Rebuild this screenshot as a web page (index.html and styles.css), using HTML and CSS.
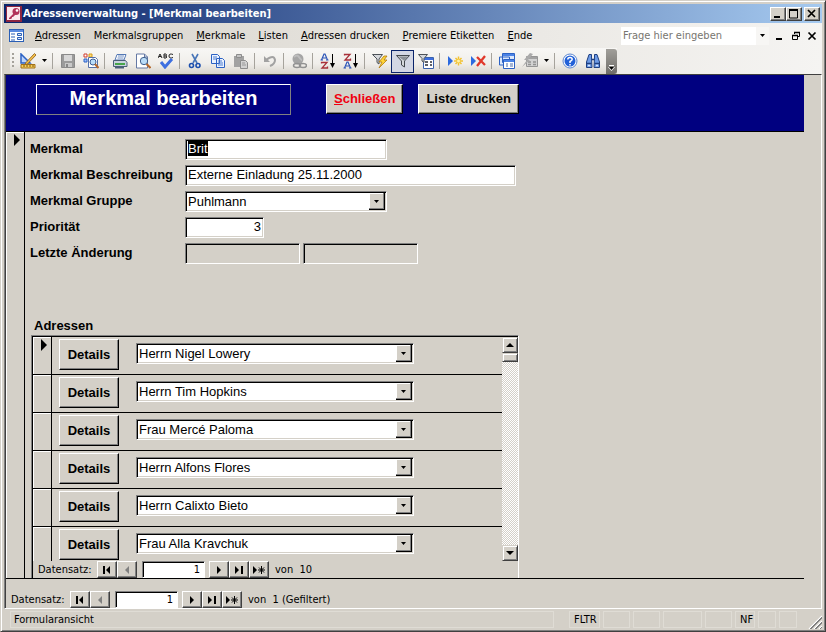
FILE: index.html
```html
<!DOCTYPE html>
<html lang="de">
<head>
<meta charset="utf-8">
<title>Adressenverwaltung - [Merkmal bearbeiten]</title>
<link rel="stylesheet" href="styles.css">
</head>
<body>
<div class="window">
  <header class="titlebar">
    <svg class="app-icon" viewBox="0 0 16 16"><rect width="16" height="16" fill="#8d2540"/><rect x="1" y="1" width="13" height="13" fill="#fbe9ee"/><circle cx="10" cy="5.5" r="3.5" fill="#b2325a"/><circle cx="11" cy="4.500" r="1.300" fill="#fff"/><path d="M8 7 3 12v1h2l1-1V11h1L10 8z" fill="#b2325a"/></svg>
    <h1 class="title">Adressenverwaltung - [Merkmal bearbeiten]</h1>
    <div class="caption-buttons">
      <button class="cap" aria-label="Minimieren"><svg viewBox="0 0 12 10"><path d="M2 8h6" stroke="#000" stroke-width="2"/></svg></button>
      <button class="cap" aria-label="Maximieren"><svg viewBox="0 0 12 10"><path d="M1.500 1v8h8V1" fill="none" stroke="#000"/><path d="M1 1h9" stroke="#000" stroke-width="2"/></svg></button>
      <button class="cap cap-close" aria-label="Beenden"><svg viewBox="0 0 12 10"><path d="m2 1 7 7M9 1 2 8" stroke="#000" stroke-width="1.700"/></svg></button>
    </div>
  </header>

  <nav class="menubar">
    <svg class="form-icon" viewBox="0 0 16 16"><rect x=".5" y="1.500" width="14" height="12" fill="#fff" stroke="#2b5fb5"/><path d="M1 3h13" stroke="#5b8be0" stroke-width="2"/><path d="M2 6h4M2 9h4M2 12h4" stroke="#2b5fb5"/><path d="M8.500 5.500h4v2h-4zM8.500 9.500h4v2h-4z" fill="#dbe8fc" stroke="#2b5fb5"/></svg>
    <div class="menu-items">
      <button><u>A</u>dressen</button>
      <button>Merkmals<u>g</u>ruppen</button>
      <button><u>M</u>erkmale</button>
      <button><u>L</u>isten</button>
      <button><u>A</u>dressen drucken</button>
      <button><u>P</u>remiere Etiketten</button>
      <button><u>E</u>nde</button>
    </div>
    <div class="ask">
      <input type="text" placeholder="Frage hier eingeben" aria-label="Frage hier eingeben">
      <button aria-label="Fragen anzeigen"><svg viewBox="0 0 7 4"><path d="M1 0h5L3.500 3z"/></svg></button>
    </div>
    <div class="mdi-buttons">
      <button aria-label="Formular minimieren"><svg viewBox="0 0 10 10"><path d="M1 8h6" stroke="#000" stroke-width="2"/></svg></button>
      <button aria-label="Formular wiederherstellen"><svg viewBox="0 0 10 10"><path d="M3.500 3V1.500h5v4H7M1.500 4.500h5v4h-5z" fill="none" stroke="#000"/><path d="M3 1.500h6M1 4.500h6" stroke="#000" stroke-width="1.600"/></svg></button>
      <button aria-label="Formular schließen"><svg viewBox="0 0 10 10"><path d="m1.500 1.500 7 7M8.500 1.500l-7 7" stroke="#000" stroke-width="1.700"/></svg></button>
    </div>
  </nav>

  <div class="toolbar-row">
    <div class="toolbar" role="toolbar" aria-label="Formularansicht">
      <span class="grip"></span>
      <button class="tool" aria-label="Ansicht"><svg viewBox="0 0 16 16"><path d="M1 1v9h9z" fill="#bcd4fa" stroke="#2c62c4" stroke-width="1.500"/><path d="M14.500.5 6 9.500 5 12l2.500-1L16 2z" fill="#f5c04a" stroke="#8a5a14" stroke-width=".8"/><path d="M1 11.500h14v3.500H1z" fill="#f6cf58" stroke="#a1701a"/><path d="M4 12v2M7 12v2M10 12v2M13 12v2" stroke="#7e5510"/></svg></button>
      <button class="drop" aria-label="Ansichten"><svg viewBox="0 0 7 4"><path d="M1 0h5L3.500 3z"/></svg></button>
      <span class="sep"></span>
      <button class="tool" aria-label="Speichern"><svg viewBox="0 0 16 16"><path d="M1.500 1.500h13v13h-13z" fill="#9b9b9b" stroke="#8a8a8a"/><path d="M4 2h8v6H4z" fill="#d8d8d8"/><path d="M5 10h7v4H5z" fill="#c9c9c9"/><path d="M6 11h2v3H6z" fill="#888"/></svg></button>
      <button class="tool" aria-label="Dateisuche"><svg viewBox="0 0 16 16"><path d="M1 1h3v3H1z" fill="#fff" stroke="#d03a2a"/><path d="M6 1h3v3H6z" fill="#ffe27a" stroke="#d59a1c"/><path d="M1 6h3v3H1z" fill="#9cc0ff" stroke="#2c62c4"/><path d="M5.500 4.500h7l2 2v8h-9z" fill="#fff" stroke="#5470a8"/><circle cx="10" cy="9" r="3" fill="#b9dcf8" stroke="#3c5c94"/><path d="m12 11 3.500 4" stroke="#b5682c" stroke-width="2"/></svg></button>
      <span class="sep"></span>
      <button class="tool" aria-label="Drucken"><svg viewBox="0 0 16 16"><path d="M5 1.500h9L12 7H3z" fill="#fff" stroke="#5478b4"/><path d="M6 3h6M5.500 5h6" stroke="#7090c4"/><path d="M1.500 7.500h12l1.500 2v4H1.500z" fill="#c9d2dd" stroke="#4a5e78"/><path d="M3 10h10v2H3z" fill="#46a54a"/><path d="M3 14.500h9" stroke="#4a5e78" stroke-width="2"/></svg></button>
      <button class="tool" aria-label="Seitenansicht"><svg viewBox="0 0 16 16"><path d="M1.500 1h8l3 3v11h-11z" fill="#fff" stroke="#6579a4"/><path d="M9.500 1v3h3" fill="none" stroke="#6579a4"/><circle cx="9" cy="8" r="3.700" fill="#b9dcf8" stroke="#3f5e8c"/><path d="m11.500 11 4 4" stroke="#b5682c" stroke-width="2"/></svg></button>
      <button class="tool" aria-label="Rechtschreibung"><svg viewBox="0 0 16 16"><path d="m0 5 2-4 2 4M1 3.500h2M6 1v4h2q1.500-1 0-2 1-1.500 0-2H6M6 3h2M15 1.500q-4-1.500-4 1.500t4 1.500" fill="none" stroke="#222"/><path d="m3 9 4 5 7-8" fill="none" stroke="#3d6fe0" stroke-width="3"/></svg></button>
      <span class="sep"></span>
      <button class="tool" aria-label="Ausschneiden"><svg viewBox="0 0 16 16"><path d="m5 1 5 9M11 1 6 10" stroke="#4a76b8" stroke-width="1.600"/><circle cx="4.500" cy="12.500" r="2" fill="none" stroke="#1c4fae" stroke-width="1.600"/><circle cx="11" cy="12.500" r="2" fill="none" stroke="#1c4fae" stroke-width="1.600"/></svg></button>
      <button class="tool" aria-label="Kopieren"><svg viewBox="0 0 16 16"><path d="M1.500 1.500h6l2 2v7h-8zM6.500 5.500h6l2 2v7h-8z" fill="#eaf2ff" stroke="#2c62c4"/><path d="M3 4h4M3 6h3M8 8h4M8 10h5M8 12h5" stroke="#4c7cd0"/></svg></button>
      <button class="tool" aria-label="Einfügen"><svg viewBox="0 0 16 16"><path d="M1 3h10v11H1z" fill="#a2a2a2"/><path d="M3.500 1.500h5v3h-5z" fill="#c5c5c5" stroke="#8c8c8c"/><path d="M7.500 7.500h5l2 2v6h-7z" fill="#d2d2d2" stroke="#8c8c8c"/><path d="M9 10h3M9 12h4" stroke="#999"/></svg></button>
      <span class="sep"></span>
      <button class="tool" aria-label="Rückgängig"><svg viewBox="0 0 16 16"><path d="M4 7q8-6 9 0 0 4-5 6" fill="none" stroke="#a2a2a2" stroke-width="2"/><path d="M2 3v6h6z" fill="#a2a2a2"/></svg></button>
      <span class="sep"></span>
      <button class="tool" aria-label="Hyperlink"><svg viewBox="0 0 16 16"><circle cx="7" cy="6" r="5.500" fill="#a5a5a5"/><path d="M3 4q3-3 5 0t3 3" stroke="#bdbdbd" fill="none" stroke-width="2"/><ellipse cx="6" cy="12.500" rx="3.500" ry="2" fill="none" stroke="#929292" stroke-width="1.500"/><ellipse cx="12" cy="12.500" rx="3.500" ry="2" fill="none" stroke="#929292" stroke-width="1.500"/></svg></button>
      <span class="sep"></span>
      <button class="tool" aria-label="Aufsteigend sortieren"><svg viewBox="0 0 16 16"><path d="m1.500 7 2.500-6h1l2.500 6M3 5h3M0.500 7h2.500M6 7h2.500" fill="none" stroke="#2c55b8" stroke-width="1.200"/><path d="M1.500 10.500V9.500H7L2 15h5.500v-1.500" fill="none" stroke="#a8303a" stroke-width="1.300"/><path d="M12.500 1v12" stroke="#000"/><path d="M10 10h5l-2.500 5z"/></svg></button>
      <button class="tool" aria-label="Absteigend sortieren"><svg viewBox="0 0 16 16"><path d="M1.500 2.500V1.500H7L2 7h5.500V5.500" fill="none" stroke="#a8303a" stroke-width="1.300"/><path d="m1.500 15 2.500-6h1l2.500 6M3 13h3M0.500 15h2.500M6 15h2.500" fill="none" stroke="#2c55b8" stroke-width="1.200"/><path d="M12.500 1v12" stroke="#000"/><path d="M10 10h5l-2.500 5z"/></svg></button>
      <span class="sep"></span>
      <button class="tool" aria-label="Auswahlbasierter Filter"><svg viewBox="0 0 16 16"><path d="M.5 1.500h10L7 6v5l-2-1.500V6z" fill="#d5d8dc" stroke="#4d5359"/><path d="m12 3-5 6h3l-3 6 8-8h-3l3-4z" fill="#ffd535" stroke="#b17a10" stroke-width=".8"/></svg></button>
      <button class="tool pressed" aria-label="Filter entfernen" aria-pressed="true"><svg viewBox="0 0 16 16"><path d="M1.500 2.500h13L9.500 8v6l-3-2V8z" fill="#d5d8dc" stroke="#42474d"/><path d="M3 3.500h10l-4 4z" fill="#8b9096"/></svg></button>
      <button class="tool" aria-label="Formularbasierter Filter"><svg viewBox="0 0 16 16"><path d="M5.500 4.500h10v11h-10z" fill="#fff" stroke="#3a62ac"/><path d="M6 6h9" stroke="#3d6fe0" stroke-width="2"/><path d="M7 9h3M7 12h3M12 9h2M12 12h2" stroke="#2b2f38" stroke-width="1.500"/><path d="M.5 1.500h9L6 5.500v4L4 8V5.500z" fill="#d5d8dc" stroke="#4d5359"/></svg></button>
      <span class="sep"></span>
      <button class="tool" aria-label="Neuer Datensatz"><svg viewBox="0 0 16 16"><path d="m1 3 5 5-5 5z" fill="#2c6ae0"/><path d="M11.500 3.500v9M7 8h9M8.500 5l6 6M14.500 5l-6 6" stroke="#f2c230" stroke-width="1.500"/><circle cx="11.500" cy="8" r="1.500" fill="#fff3a8"/></svg></button>
      <button class="tool" aria-label="Datensatz löschen"><svg viewBox="0 0 16 16"><path d="m1 3 5 5-5 5z" fill="#2c6ae0"/><path d="m7 4 8 8M15 3l-8 10" stroke="#e0382a" stroke-width="2.300"/></svg></button>
      <span class="sep"></span>
      <button class="tool" aria-label="Datenbankfenster"><svg viewBox="0 0 16 16"><path d="M3.500.5h12v9h-12zM.5 4h10v8H.5z" fill="#dce8fc" stroke="#2c62c4"/><path d="M4.500 6.500h11v9h-11z" fill="#fff" stroke="#2c62c4"/><path d="M4 2h11M5 8h10" stroke="#4b83e6" stroke-width="2"/><path d="M7 11h2M7 13h2M11 11h3M11 13h3" stroke="#4c6da8"/></svg></button>
      <button class="tool" aria-label="Neues Objekt"><svg viewBox="0 0 16 16"><path d="M4.500 3.500h11v10h-11z" fill="#d2d2d2" stroke="#959595"/><path d="M6 9h3M6 11.500h3M11 9h3M11 11.500h3M5 5h10" stroke="#929292" stroke-width="1.500"/><path d="M8 0 2 7h3L0 14l8-7H6l5-6z" fill="#aaa"/></svg></button>
      <button class="drop" aria-label="Weitere Objekte"><svg viewBox="0 0 7 4"><path d="M1 0h5L3.500 3z"/></svg></button>
      <span class="sep"></span>
      <button class="tool" aria-label="Hilfe"><svg viewBox="0 0 16 16"><circle cx="8" cy="8" r="7" fill="#fff" stroke="#5b86cf"/><circle cx="8" cy="8" r="5.500" fill="#2361d8"/><path d="M5.800 6.500q0-2 2.200-2t2.200 1.800Q10.200 7.500 8 8.500V10M8 11v1.500" fill="none" stroke="#fff" stroke-width="1.500"/></svg></button>
      <button class="tool" aria-label="Suchen"><svg viewBox="0 0 16 16"><path d="M4 1.500h2.500V4L7 14.500H1.500V9zM12 1.500H9.500V4L9 14.500h5.500V9z" fill="#6d9be6" stroke="#1f3f80"/><path d="M6.500 6.500h3M1.500 10.500h5M9.500 10.500h5" stroke="#1f3f80" stroke-width="1.500"/><path d="M3 12.500h2M11 12.500h2" stroke="#d8e7ff" stroke-width="1.500"/></svg></button>
      <button class="toolbar-end" aria-label="Symbolleistenoptionen"><svg viewBox="0 0 7 7"><path d="M1 1.500h5" stroke="#fff"/><path d="M0 3h7L3.500 7z" fill="#fff"/><path d="M1 3h5L3.500 6z"/></svg></button>
    </div>
  </div>

  <main class="client">
    <section class="form-header">
      <h2>Merkmal bearbeiten</h2>
      <button class="command close"><u>S</u>chließen</button>
      <button class="command">Liste drucken</button>
    </section>
    <section class="detail">
      <div class="selector"><svg viewBox="0 0 6 12"><path d="m0 0 6 6-6 6z"/></svg></div>
      <form class="fields">
        <div class="field"><label for="merkmal">Merkmal</label><input id="merkmal" class="box w-name" type="text" value="Brit"></div>
        <div class="field"><label for="beschreibung">Merkmal Beschreibung</label><input id="beschreibung" class="box w-long" type="text" value="Externe Einladung 25.11.2000"></div>
        <div class="field"><label for="gruppe">Merkmal Gruppe</label><span class="combo w-name"><select id="gruppe"><option>Puhlmann</option></select></span></div>
        <div class="field"><label for="prio">Priorität</label><input id="prio" class="box w-num" type="text" value="3"></div>
        <div class="field"><label for="datum">Letzte Änderung</label><input id="datum" class="box w-ro" type="text" readonly><input class="box w-ro" type="text" readonly aria-label="Geändert von"></div>
        <h3>Adressen</h3>
        <div class="subform">
          <div class="sub-main">
            <div class="records">
              <div class="record"><div class="selector"><svg viewBox="0 0 6 12"><path d="m0 0 6 6-6 6z"/></svg></div><button type="button" class="details">Details</button><span class="combo"><select aria-label="Adresse 1"><option>Herrn Nigel Lowery</option></select></span></div>
              <div class="record"><div class="selector"></div><button type="button" class="details">Details</button><span class="combo"><select aria-label="Adresse 2"><option>Herrn Tim Hopkins</option></select></span></div>
              <div class="record"><div class="selector"></div><button type="button" class="details">Details</button><span class="combo"><select aria-label="Adresse 3"><option>Frau Mercé Paloma</option></select></span></div>
              <div class="record"><div class="selector"></div><button type="button" class="details">Details</button><span class="combo"><select aria-label="Adresse 4"><option>Herrn Alfons Flores</option></select></span></div>
              <div class="record"><div class="selector"></div><button type="button" class="details">Details</button><span class="combo"><select aria-label="Adresse 5"><option>Herrn Calixto Bieto</option></select></span></div>
              <div class="record"><div class="selector"></div><button type="button" class="details">Details</button><span class="combo"><select aria-label="Adresse 6"><option>Frau Alla Kravchuk</option></select></span></div>
            </div>
            <div class="scrollbar">
              <button type="button" aria-label="Nach oben"><svg viewBox="0 0 8 4"><path d="M0 4h8L4 0z"/></svg></button>
              <div class="thumb"></div>
              <button type="button" class="down" aria-label="Nach unten"><svg viewBox="0 0 8 4"><path d="M0 0h8L4 4z"/></svg></button>
            </div>
          </div>
          <div class="recnav">
            <label for="sub-rec">Datensatz:</label>
            <button type="button" aria-label="Erste Adresse"><svg viewBox="0 0 10 8"><path d="M1 0h2v8H1zM8 0v8L4 4z"/></svg></button>
            <button type="button" disabled aria-label="Vorige Adresse"><svg viewBox="0 0 10 8"><path d="M7 0v8L3 4z"/></svg></button>
            <input id="sub-rec" type="text" value="1">
            <button type="button" aria-label="Nächste Adresse"><svg viewBox="0 0 10 8"><path d="M3 0v8l4-4z"/></svg></button>
            <button type="button" aria-label="Letzte Adresse"><svg viewBox="0 0 10 8"><path d="M1 0v8l4-4zM7 0h2v8H7z"/></svg></button>
            <button type="button" aria-label="Neue Adresse"><svg class="wide" viewBox="0 0 14 8"><path d="M1 0v8l4-4z"/><path d="M9.500 0v8M6 4h7M7 1.500l5 5M12 1.500l-5 5" stroke="#000"/></svg></button>
            <span>von&nbsp; 10</span>
          </div>
        </div>
      </form>
    </section>
    <div class="recnav main-nav">
      <label for="main-rec">Datensatz:</label>
      <button type="button" aria-label="Erster Datensatz"><svg viewBox="0 0 10 8"><path d="M1 0h2v8H1zM8 0v8L4 4z"/></svg></button>
      <button type="button" disabled aria-label="Voriger Datensatz"><svg viewBox="0 0 10 8"><path d="M7 0v8L3 4z"/></svg></button>
      <input id="main-rec" type="text" value="1">
      <button type="button" aria-label="Nächster Datensatz"><svg viewBox="0 0 10 8"><path d="M3 0v8l4-4z"/></svg></button>
      <button type="button" aria-label="Letzter Datensatz"><svg viewBox="0 0 10 8"><path d="M1 0v8l4-4zM7 0h2v8H7z"/></svg></button>
      <button type="button" aria-label="Neuer Datensatz anlegen"><svg class="wide" viewBox="0 0 14 8"><path d="M1 0v8l4-4z"/><path d="M9.500 0v8M6 4h7M7 1.500l5 5M12 1.500l-5 5" stroke="#000"/></svg></button>
      <span>von&nbsp; 1 (Gefiltert)</span>
    </div>
  </main>

  <footer class="status">
    <span class="panel message">Formularansicht</span>
    <span class="panel flag">FLTR</span>
    <span class="panel medium"></span>
    <span class="panel medium"></span>
    <span class="panel large"></span>
    <span class="panel medium"></span>
    <span class="panel nf">NF</span>
    <span class="panel small"></span>
    <span class="panel small"></span>
    <svg class="resize" viewBox="0 0 14 14"><path d="M1 14 14 1M6 14l8-8M11 14l3-3" stroke="#fff" stroke-width="1.200"/><path d="M2 14 14 2M3 14 14 3M7 14l7-7M8 14l6-6M12 14l2-2" stroke="#808080"/></svg>
  </footer>
</div>
<script src="script.js"></script>
</body>
</html>
```

FILE: styles.css
```css
:root {
  --face: #d4d0c8;
  --shadow: #808080;
  --dark: #404040;
  --ui: "DejaVu Sans Condensed", "Noto Sans", "Liberation Sans", sans-serif;
  --form: "Liberation Sans", Arial, sans-serif;
}

* { box-sizing: border-box; }

body {
  margin: 0;
  background: var(--face);
  color: #000;
  font: 11px/16px var(--ui);
}

button, input, select {
  margin: 0;
  padding: 0;
  border: 0;
  border-radius: 0;
  background: none;
  color: inherit;
  font: inherit;
}

button {
  display: flex;
  align-items: center;
  justify-content: center;
}

svg { display: block; flex: none; }
input:focus { outline: none; }
::selection { background: #000; color: #fff; }

.window {
  display: flex;
  flex-direction: column;
  min-height: 100vh;
  padding: 2px;
  border: 1px solid var(--dark);
  border-top-color: var(--face);
  border-left-color: var(--face);
  box-shadow: inset 1px 1px #fff, inset -1px -1px var(--shadow);
}

/* Title bar */
.titlebar {
  display: flex;
  align-items: center;
  height: 19px;
  margin: 1px 1px 0;
  padding: 0 2px;
  background: linear-gradient(to right, #0a246a, #a6caf0);
}
.app-icon { width: 16px; height: 16px; }
.title {
  flex: 1;
  margin: 0 0 0 1px;
  color: #fff;
  font-size: 11px;
  font-weight: bold;
  white-space: nowrap;
}
.caption-buttons { display: flex; }
.cap {
  width: 16px;
  height: 14px;
  background: var(--face);
  border: 1px solid var(--dark);
  border-top-color: #fff;
  border-left-color: #fff;
  box-shadow: inset -1px -1px var(--shadow);
}
.cap svg { width: 12px; height: 10px; }
.cap-close { margin-left: 2px; }

/* Menu bar */
.menubar {
  display: flex;
  align-items: center;
  height: 25px;
  margin: 0 1px;
  padding: 0 5px;
  background: linear-gradient(to right, #d8d4cc, #f5f4f2);
}
.form-icon { width: 16px; height: 16px; }
.menu-items { display: flex; flex: 1; gap: 13px; margin-left: 10px; }
.menu-items button { white-space: nowrap; }
.ask { display: flex; width: 148px; height: 18px; background: #fff; }
.ask input { flex: 1; min-width: 0; padding-left: 2px; }
.ask input::placeholder { color: #77756f; opacity: 1; }
.ask button { width: 13px; background: #f7f6f4; }
.ask svg, .drop svg { width: 7px; height: 4px; }
.mdi-buttons { display: flex; gap: 6px; margin-left: 6px; }
.mdi-buttons svg { width: 10px; height: 10px; }

/* Toolbar */
.toolbar-row {
  display: flex;
  height: 26px;
  margin: 0 1px;
  padding-left: 6px;
  background: linear-gradient(to right, #d8d4cc, #f5f4f2);
}
.toolbar {
  display: flex;
  align-items: center;
  background: linear-gradient(#f8f7f5, #f0eeea 60%, #d9d5cd);
}
.grip {
  width: 2px;
  height: 16px;
  margin: 0 2px;
  background: repeating-linear-gradient(#a5a29b 0 2px, transparent 2px 4px);
}
.tool { width: 23px; height: 23px; }
.tool svg { width: 16px; height: 16px; }
.pressed { background: #d3d7e4; border: 1px solid #0a246a; }
.drop { width: 11px; height: 22px; }
.sep { width: 1px; height: 16px; margin: 0 3px 0 2px; background: #a6a39c; }
.toolbar-end {
  align-items: flex-end;
  width: 11px;
  height: 25px;
  margin-left: 2px;
  padding-bottom: 3px;
  border-radius: 0 3px 3px 0;
  background: linear-gradient(#a19f9a, #6f6d69);
}
.toolbar-end svg { width: 7px; height: 7px; }

/* Form */
.client {
  display: flex;
  flex: 1;
  flex-direction: column;
  margin: 0 1px;
  border: 1px solid #fff;
  border-top-color: var(--dark);
  border-left-color: var(--shadow);
  box-shadow: inset 1px 0 var(--dark);
  padding-left: 1px;
  font-family: var(--form);
}
.form-header {
  display: flex;
  align-items: flex-start;
  height: 57px;
  margin-right: 17px;
  padding: 9px 30px;
  background: #000080;
  border-bottom: 1px solid #000;
}
.form-header h2 {
  width: 255px;
  height: 31px;
  margin: 0 35px 0 0;
  border: 1px solid var(--shadow);
  border-top-color: #fff;
  border-left-color: #fff;
  color: #fff;
  font-size: 20px;
  line-height: 27px;
  text-align: center;
}
.command, .details {
  background: var(--face);
  border: 1px solid #000;
  border-top-color: #fff;
  border-left-color: #fff;
  box-shadow: inset -1px -1px var(--shadow);
  font: bold 13px/16px var(--form);
}
.command { height: 30px; padding: 0 7px; margin-right: 15px; }
.close { color: #f00010; }

.detail {
  display: flex;
  flex: 1;
  margin-right: 17px;
  border-bottom: 1px solid #000;
}
.selector {
  flex: none;
  width: 19px;
  padding: 2px 0 0 8px;
  border-right: 1px solid #000;
  box-shadow: inset 1px 1px #fff;
}
.selector svg { width: 6px; height: 12px; }
.fields { display: flex; flex: 1; flex-direction: column; gap: 5px; padding: 7px 0 0 5px; }
.field { display: flex; align-items: center; gap: 3px; height: 21px; }
.field label { width: 152px; padding-bottom: 2px; font: bold 13px/16px var(--form); white-space: nowrap; }

.box, .combo {
  height: 21px;
  background: #fff;
  border: 1px solid #fff;
  border-top-color: var(--shadow);
  border-left-color: var(--shadow);
  box-shadow: inset 1px 1px #000, inset -1px -1px var(--face);
  font: 13px/16px var(--form);
}
.box { padding: 0 2px 2px; }
.w-name { width: 202px; }
.w-long { width: 331px; }
.w-num { width: 79px; text-align: right; }
.w-ro { width: 115px; background: var(--face); }
.combo { display: flex; padding: 1px; }
.combo select {
  appearance: none;
  flex: 1;
  height: 17px;
  padding: 0 18px 0 1px;
  line-height: 16px;
  background: url("data:image/svg+xml,%3Csvg xmlns='http://www.w3.org/2000/svg' width='16' height='17'%3E%3Cpath fill='%23000' d='M0 0h16v17H0z'/%3E%3Cpath fill='%23808080' d='M0 0h15v16H0z'/%3E%3Cpath fill='%23fff' d='M0 0h14v15H0z'/%3E%3Cpath fill='%23d4d0c8' d='M1 1h13v14H1z'/%3E%3Cpath d='M5 7h5L7.500 10z'/%3E%3C/svg%3E") right top no-repeat;
}

.fields h3 { margin: 48px 0 0 4px; font: bold 13px/18px var(--form); }
.subform {
  width: 488px;
  margin: -5px 0 0 1px;
  border: 1px solid #fff;
  border-top-color: var(--shadow);
  border-left-color: var(--shadow);
  border-bottom: 0;
  box-shadow: inset 1px 1px #000;
  padding: 1px 0 0 1px;
}
.sub-main { display: flex; }
.records { flex: 1; }
.record { display: flex; height: 38px; border-bottom: 1px solid #000; }
.record:last-child { height: 34px; border-bottom: 0; }
.details { width: 60px; height: 31px; margin: 2px 17px 0 7px; }
.record .combo { width: 278px; margin-top: 6px; }
.scrollbar {
  display: flex;
  flex-direction: column;
  width: 16px;
  background: repeating-conic-gradient(#fff 0 25%, var(--face) 0 50%) 0 0 / 2px 2px;
}
.scrollbar button, .thumb {
  height: 16px;
  background: var(--face);
  border: 1px solid var(--dark);
  border-top-color: var(--face);
  border-left-color: var(--face);
  box-shadow: inset 1px 1px #fff, inset -1px -1px var(--shadow);
}
.scrollbar .thumb { height: 9px; }
.scrollbar svg { width: 8px; height: 4px; }
.scrollbar .down { margin-top: auto; }

/* Record navigation */
.recnav {
  display: flex;
  height: 17px;
  padding-left: 5px;
  font: 11px/17px var(--ui);
}
.recnav label { width: 59px; }
.recnav button {
  width: 20px;
  background: var(--face);
  border: 1px solid var(--dark);
  border-top-color: #fff;
  border-left-color: #fff;
  box-shadow: inset -1px -1px var(--shadow);
}
.recnav svg { width: 10px; height: 8px; }
.recnav .wide { width: 14px; }
.recnav button:disabled { fill: var(--shadow); }
.recnav input {
  width: 63px;
  margin: 0 4px 0 5px;
  padding-right: 4px;
  background: #fff;
  border: 1px solid #fff;
  border-top-color: var(--shadow);
  border-left-color: var(--shadow);
  box-shadow: inset 1px 1px #000;
  text-align: right;
}
.recnav span { margin-left: 6px; }
.main-nav { margin-top: 12px; }

/* Status bar */
.status {
  display: flex;
  align-items: center;
  gap: 3px;
  height: 20px;
  margin: 0 1px;
  padding-left: 6px;
}
.panel { height: 17px; border: 1px solid #dfdcd5; line-height: 15px; }
.message { flex: 1; margin-right: 12px; padding-left: 3px; }
.flag { width: 31px; padding-left: 4px; }
.medium { width: 27px; }
.large { width: 39px; }
.nf { width: 20px; padding-left: 4px; }
.small { width: 18px; }
.resize { align-self: flex-end; width: 14px; height: 14px; margin-left: 8px; }
```

FILE: script.js
```js
// The first field opens with its content selected.
const first = document.getElementById("merkmal");
first.focus();
first.select();
```
